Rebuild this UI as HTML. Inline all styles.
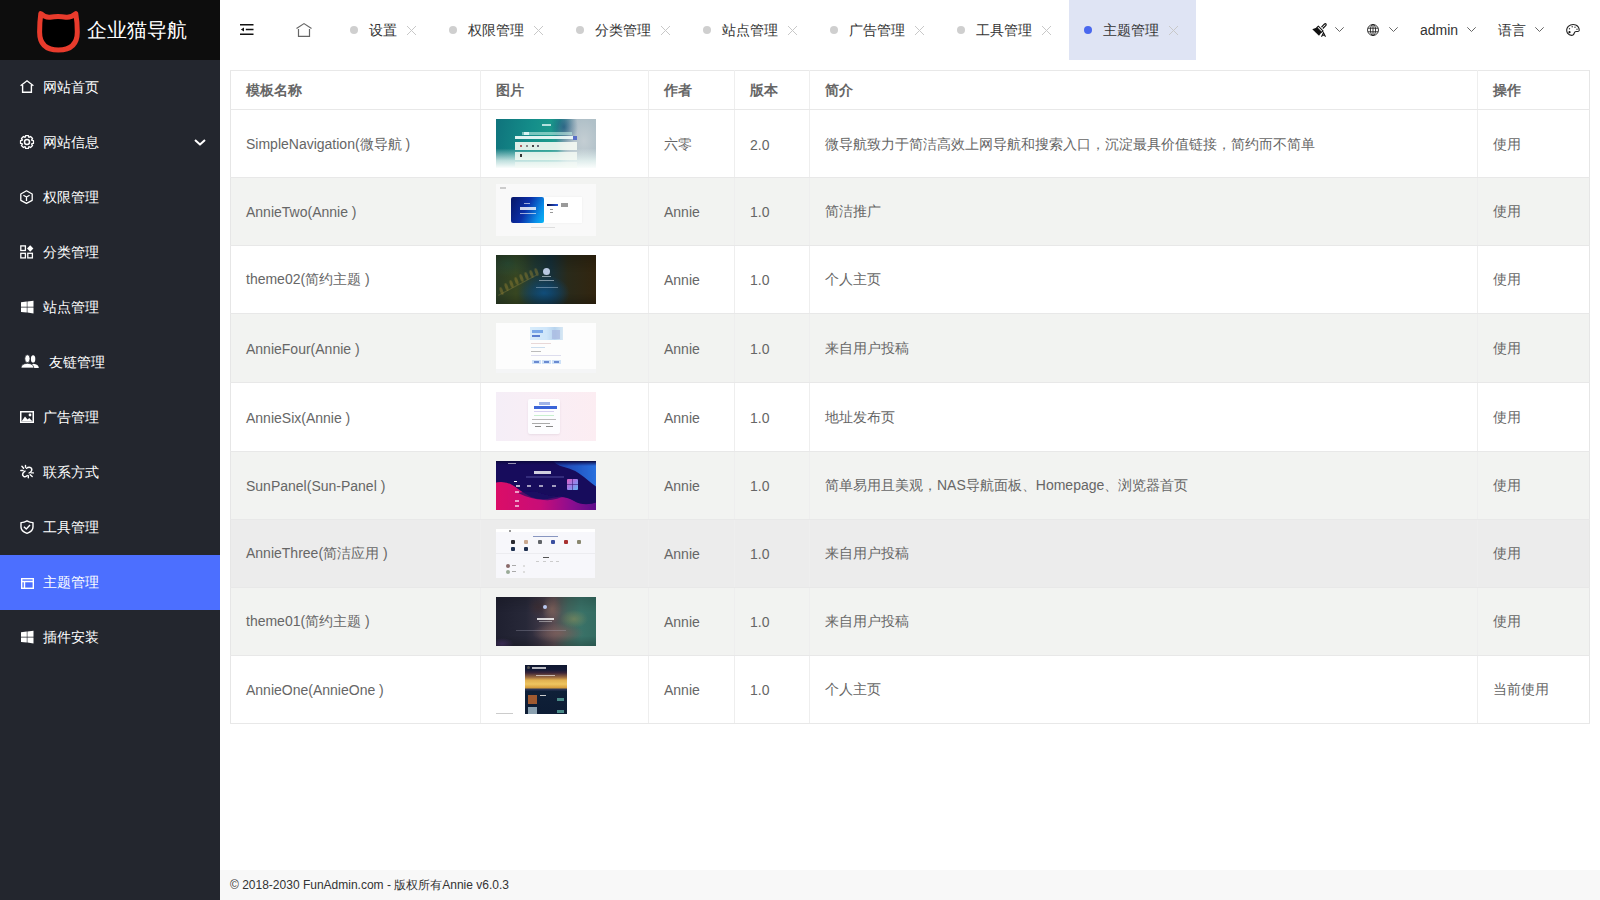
<!DOCTYPE html>
<html><head><meta charset="utf-8">
<style>
*{box-sizing:border-box;margin:0;padding:0}
html,body{width:1600px;height:900px;overflow:hidden;background:#fff;font-family:"Liberation Sans",sans-serif;}
svg{position:absolute;display:block;overflow:visible}
.side{position:absolute;left:0;top:0;width:220px;height:900px;background:#23262e;}
.logo{position:absolute;left:0;top:0;width:220px;height:60px;background:#0d0d0d;}
.logo .t{position:absolute;left:87px;top:16px;font-size:20px;line-height:28px;color:#fff;white-space:nowrap;}
.mi{position:absolute;left:0;width:220px;height:55px;color:#fff;font-size:14px;line-height:55px;}
.mi .tx{position:absolute;left:43px;top:0;white-space:nowrap;}
.mi.on{background:#4c6fff;}
.hdr{position:absolute;left:220px;top:0;width:1380px;height:60px;background:#fff;}
.tab{position:absolute;top:0;height:60px;font-size:14px;color:#333;}
.tab .dot{position:absolute;left:15px;top:26px;width:8px;height:8px;border-radius:50%;background:#cfcfcf;}
.tab .tx{position:absolute;left:34px;top:0;line-height:60px;white-space:nowrap;}
.tab.on{background:#dfe4f4;}
.tab.on .dot{background:#4a68ee;}
.rt{position:absolute;top:0;height:60px;line-height:60px;font-size:14px;color:#333;white-space:nowrap;}
table{position:absolute;left:230px;top:70px;border-collapse:collapse;table-layout:fixed;width:1359px;font-size:14px;color:#666;}
td,th{border:1px solid #e8e8e8;border-left-color:#eeeeee;border-right-color:#eeeeee;padding:1px 15px 0;text-align:left;white-space:nowrap;overflow:hidden;}
th{height:39px;font-weight:bold;color:#666;}
tr.g td{background:#f2f3f1;}
td:first-child,th:first-child{border-left-color:#e6e6e6;}
td:last-child,th:last-child{border-right-color:#e6e6e6;}
tr.r1 td{padding-top:3px;}
tr.h td{background:#ececec;}
.im{position:absolute;overflow:hidden;}
.im .im{filter:blur(.35px);}
.foot{position:absolute;left:220px;top:870px;width:1380px;height:30px;background:#f8f8f8;font-size:12px;line-height:30px;color:#333;padding-left:10px;}
</style></head><body>
<div class="side">
  <div class="logo">
    <svg style="left:0;top:0" width="100" height="60" viewBox="0 0 100 60"><path d="M40.8,13.6 Q45,17.8 50,17.3 Q58,15.8 66,17.3 Q71,17.8 75.8,13.6 Q77.3,22 77.3,32 Q77.3,50 58.4,50 Q39.6,50 39.6,32 Q39.6,22 40.8,13.6 Z" fill="#000" stroke="#e83b2c" stroke-width="5" stroke-linejoin="round"/></svg>
    <div class="t">企业猫导航</div>
  </div>
  <div class="mi" style="top:60px"><span class="tx">网站首页</span></div>
  <div class="mi" style="top:115px"><span class="tx">网站信息</span></div>
  <div class="mi" style="top:170px"><span class="tx">权限管理</span></div>
  <div class="mi" style="top:225px"><span class="tx">分类管理</span></div>
  <div class="mi" style="top:280px"><span class="tx">站点管理</span></div>
  <div class="mi" style="top:335px"><span class="tx" style="left:49px">友链管理</span></div>
  <div class="mi" style="top:390px"><span class="tx">广告管理</span></div>
  <div class="mi" style="top:445px"><span class="tx">联系方式</span></div>
  <div class="mi" style="top:500px"><span class="tx">工具管理</span></div>
  <div class="mi on" style="top:555px"><span class="tx">主题管理</span></div>
  <div class="mi" style="top:610px"><span class="tx">插件安装</span></div>
  <!-- icons -->
  <svg style="left:20px;top:80px" width="14" height="13" viewBox="0 0 14 13" fill="none" stroke="#fff" stroke-width="1.4"><path d="M0.6,5.8 L7,0.8 L13.4,5.8"/><path d="M2.6,5 V12.3 H11.4 V5"/></svg>
  <svg style="left:20px;top:135px" width="14" height="14" viewBox="0 0 14 14" fill="none" stroke="#fff" stroke-width="1.3" stroke-linejoin="round"><path d="M11.53,5.14 L13.44,5.56 L13.44,8.44 L11.53,8.86 L11.52,8.89 L12.57,10.54 L10.54,12.57 L8.89,11.52 L8.86,11.53 L8.44,13.44 L5.56,13.44 L5.14,11.53 L5.11,11.52 L3.46,12.57 L1.43,10.54 L2.48,8.89 L2.47,8.86 L0.56,8.44 L0.56,5.56 L2.47,5.14 L2.48,5.11 L1.43,3.46 L3.46,1.43 L5.11,2.48 L5.14,2.47 L5.56,0.56 L8.44,0.56 L8.86,2.47 L8.89,2.48 L10.54,1.43 L12.57,3.46 L11.52,5.11 Z"/><circle cx="7" cy="7" r="2.5" stroke-width="1.5"/></svg>
  <svg style="left:20px;top:190px" width="13" height="14" viewBox="0 0 13 14" fill="none" stroke="#fff" stroke-width="1.3" stroke-linejoin="round"><path d="M6.5,0.8 L12.2,4 V10.3 L6.5,13.3 L0.8,10.3 V4 Z"/><path d="M3.4,5.2 L6.5,7 L9.6,5.2 M6.5,7 V11"/></svg>
  <svg style="left:20px;top:245px" width="14" height="14" viewBox="0 0 14 14"><g fill="none" stroke="#fff" stroke-width="1.3"><rect x="0.8" y="0.9" width="4.6" height="4.6"/><rect x="0.8" y="8.3" width="4.6" height="4.6"/><rect x="7.8" y="8.3" width="4.6" height="4.6"/></g><path d="M10.2,0.3 L13.4,3.5 L10.2,6.7 L7,3.5 Z" fill="#fff"/></svg>
  <svg style="left:21px;top:301px" width="13" height="13" viewBox="0 0 13 13" fill="#fff"><path d="M0,1.3 L5.8,0.6 V5.8 H0 Z M6.4,0.5 L12.5,-0.2 V5.8 H6.4 Z M0,6.4 H5.8 V11.5 L0,10.9 Z M6.4,6.4 H12.5 V12.4 L6.4,11.6 Z"/></svg>
  <svg style="left:21px;top:355px" width="18" height="13" viewBox="0 0 18 13" fill="#fff"><ellipse cx="12.1" cy="3.9" rx="2.2" ry="3.7"/><path d="M10.5,13 Q10.5,9 12.3,8.7 Q17.6,9 17.8,13 Z"/><ellipse cx="6.4" cy="3.7" rx="2.6" ry="3.9" stroke="#23262e" stroke-width="0.7"/><path d="M0,13 Q0.3,8.6 6.4,8.3 Q12.6,8.6 12.8,13 Z" stroke="#23262e" stroke-width="0.7"/></svg>
  <svg style="left:20px;top:411px" width="14" height="12" viewBox="0 0 14 12"><rect x="0.75" y="0.75" width="12.5" height="10.5" fill="none" stroke="#fff" stroke-width="1.5"/><path d="M1.5,10.5 L5,5.5 L7.5,8.6 L9.3,7 L12.5,10.5 Z" fill="#fff"/><circle cx="10" cy="4" r="1.4" fill="#fff"/></svg>
  <svg style="left:21px;top:465px" width="13" height="13" viewBox="0 0 13 13" fill="none" stroke="#fff" stroke-width="1.4" stroke-linecap="round"><path d="M5.5,3.3 Q8,1.2 10.2,3 Q11.8,5 9.5,7.2 L8,8"/><path d="M4.1,6.1 L2.2,7.8 Q0.8,10 2.6,11.3 Q4.5,12.4 6.3,10.6"/><path d="M0.9,1.2 L2.6,3.2 M4.5,0.4 V2.2 M-0.2,5.5 H2.1 M10.3,7.9 H12.4 M9.2,9.8 L11.2,11.6 M7.3,10.7 V12.7"/></svg>
  <svg style="left:20px;top:520px" width="14" height="14" viewBox="0 0 14 14" fill="none" stroke="#fff" stroke-width="1.4" stroke-linejoin="round"><path d="M7,0.9 Q10,2.7 13,2.6 V7 Q13,11.4 7,13.3 Q1,11.4 1,7 V2.6 Q4,2.7 7,0.9 Z"/><path d="M3.9,6.7 L6.3,8.9 L10,5"/></svg>
  <svg style="left:21px;top:578px" width="13" height="11" viewBox="0 0 13 11" fill="none" stroke="#fff" stroke-width="1.4"><rect x="0.7" y="0.7" width="11.6" height="9.6"/><path d="M1,3.5 H12 M3.5,3.5 V10"/></svg>
  <svg style="left:21px;top:631px" width="13" height="13" viewBox="0 0 13 13" fill="#fff"><path d="M0,1.3 L5.8,0.6 V5.8 H0 Z M6.4,0.5 L12.5,-0.2 V5.8 H6.4 Z M0,6.4 H5.8 V11.5 L0,10.9 Z M6.4,6.4 H12.5 V12.4 L6.4,11.6 Z"/></svg>
  <svg style="left:194px;top:139px" width="12" height="7" viewBox="0 0 12 7" fill="none" stroke="#fff" stroke-width="2" stroke-linejoin="round"><path d="M1,1 L6,5.6 L11,1"/></svg>
</div>
<div class="hdr">
  <svg style="left:20px;top:24px" width="14" height="11" viewBox="0 0 14 11"><g stroke="#111" stroke-width="1.4"><path d="M0,0.7 H13.5 M0,10.3 H13.5 M5.8,5.5 H13.5"/></g><path d="M0.8,5.5 L4,3.4 V7.6 Z" fill="#111"/></svg>
  <svg style="left:76px;top:23px" width="16" height="14" viewBox="0 0 16 14" fill="none" stroke="#666" stroke-width="1.2"><path d="M0.5,5.6 L8,0.6 L15.5,5.6"/><path d="M2.5,6 V13.3 H13.5 V6"/></svg>
  <div class="tab" style="left:115px;width:99px"><span class="dot"></span><span class="tx">设置</span></div>
  <div class="tab" style="left:214px;width:127px"><span class="dot"></span><span class="tx">权限管理</span></div>
  <div class="tab" style="left:341px;width:127px"><span class="dot"></span><span class="tx">分类管理</span></div>
  <div class="tab" style="left:468px;width:127px"><span class="dot"></span><span class="tx">站点管理</span></div>
  <div class="tab" style="left:595px;width:127px"><span class="dot"></span><span class="tx">广告管理</span></div>
  <div class="tab" style="left:722px;width:127px"><span class="dot"></span><span class="tx">工具管理</span></div>
  <div class="tab on" style="left:849px;width:127px"><span class="dot"></span><span class="tx">主题管理</span></div>
  <svg style="left:187px;top:25.5px" width="9" height="9" viewBox="0 0 9 9" stroke="#c8c8c8" stroke-width="1"><path d="M0,0 L9,9 M9,0 L0,9"/></svg>
  <svg style="left:314px;top:25.5px" width="9" height="9" viewBox="0 0 9 9" stroke="#c8c8c8" stroke-width="1"><path d="M0,0 L9,9 M9,0 L0,9"/></svg>
  <svg style="left:441px;top:25.5px" width="9" height="9" viewBox="0 0 9 9" stroke="#c8c8c8" stroke-width="1"><path d="M0,0 L9,9 M9,0 L0,9"/></svg>
  <svg style="left:568px;top:25.5px" width="9" height="9" viewBox="0 0 9 9" stroke="#c8c8c8" stroke-width="1"><path d="M0,0 L9,9 M9,0 L0,9"/></svg>
  <svg style="left:695px;top:25.5px" width="9" height="9" viewBox="0 0 9 9" stroke="#c8c8c8" stroke-width="1"><path d="M0,0 L9,9 M9,0 L0,9"/></svg>
  <svg style="left:822px;top:25.5px" width="9" height="9" viewBox="0 0 9 9" stroke="#c8c8c8" stroke-width="1"><path d="M0,0 L9,9 M9,0 L0,9"/></svg>
  <svg style="left:949px;top:25.5px" width="9" height="9" viewBox="0 0 9 9" stroke="#c8c8c8" stroke-width="1"><path d="M0,0 L9,9 M9,0 L0,9"/></svg>
  <!-- right tools -->
  <svg style="left:1091px;top:23px" width="16" height="14" viewBox="0 0 16 14"><path d="M10.5,4.2 L13.3,1.2 Q14.3,0.3 15,1 Q15.6,1.8 14.7,2.7 L11.8,5.5" fill="none" stroke="#111" stroke-width="1.2"/><path d="M7.3,3.2 L12,7.9 L10.6,9.3 L5.9,4.6 Z" fill="none" stroke="#111" stroke-width="1.1"/><path d="M5.9,4.6 L10.6,9.3 L8,12.8 L1.3,6.2 Z" fill="#111"/><path d="M10.5,13.8 L12.5,9.8 L14.5,13.8 M11.3,12.3 H13.7" fill="none" stroke="#111" stroke-width="1.1"/></svg>
  <svg style="left:1115px;top:27px" width="9" height="5" viewBox="0 0 9 5" fill="none" stroke="#666" stroke-width="1"><path d="M0.3,0.3 L4.5,4.5 L8.7,0.3"/></svg>
  <svg style="left:1147px;top:24px" width="12" height="12" viewBox="0 0 12 12" fill="none" stroke="#222" stroke-width="0.9"><circle cx="6" cy="6" r="5.5"/><ellipse cx="6" cy="6" rx="2.6" ry="5.5"/><path d="M1,4.2 H11 M1,7.8 H11 M6,0.5 V11.5"/></svg>
  <svg style="left:1169px;top:27px" width="9" height="5" viewBox="0 0 9 5" fill="none" stroke="#666" stroke-width="1"><path d="M0.3,0.3 L4.5,4.5 L8.7,0.3"/></svg>
  <div class="rt" style="left:1200px">admin</div>
  <svg style="left:1247px;top:27px" width="9" height="5" viewBox="0 0 9 5" fill="none" stroke="#666" stroke-width="1"><path d="M0.3,0.3 L4.5,4.5 L8.7,0.3"/></svg>
  <div class="rt" style="left:1278px">语言</div>
  <svg style="left:1315px;top:27px" width="9" height="5" viewBox="0 0 9 5" fill="none" stroke="#666" stroke-width="1"><path d="M0.3,0.3 L4.5,4.5 L8.7,0.3"/></svg>
  <svg style="left:1346px;top:24px" width="14" height="12" viewBox="0 0 14 12"><path d="M6.5,11.3 Q3.5,11.8 1.5,9.2 Q-0.5,5.5 2.3,2.4 Q5.5,-0.5 9.8,0.9 Q13.4,2.6 13.2,6.5 Q13,7.5 11.8,7.5 L10,7.5 Q8.8,7.7 8.3,9 Q7.8,11 6.5,11.3 Z" fill="none" stroke="#222" stroke-width="1.1"/><circle cx="3.5" cy="8.2" r="1.1" fill="#111"/><circle cx="3.5" cy="4.7" r="0.7" fill="#333"/><circle cx="6.2" cy="2.8" r="0.7" fill="#333"/><circle cx="9" cy="3.2" r="0.7" fill="#333"/><circle cx="11" cy="5.3" r="0.7" fill="#333"/></svg>
</div>
<table>
<colgroup><col style="width:250px"><col style="width:168px"><col style="width:86px"><col style="width:75px"><col style="width:668px"><col style="width:112px"></colgroup>
<tr><th>模板名称</th><th>图片</th><th>作者</th><th>版本</th><th>简介</th><th>操作</th></tr>
<tr class="r1" style="height:68px"><td>SimpleNavigation(微导航 )</td><td></td><td>六零</td><td>2.0</td><td>微导航致力于简洁高效上网导航和搜索入口，沉淀最具价值链接，简约而不简单</td><td>使用</td></tr>
<tr class="g" style="height:68px"><td>AnnieTwo(Annie )</td><td></td><td>Annie</td><td>1.0</td><td>简洁推广</td><td>使用</td></tr>
<tr style="height:68px"><td>theme02(简约主题 )</td><td></td><td>Annie</td><td>1.0</td><td>个人主页</td><td>使用</td></tr>
<tr class="g" style="height:69px"><td>AnnieFour(Annie )</td><td></td><td>Annie</td><td>1.0</td><td>来自用户投稿</td><td>使用</td></tr>
<tr style="height:69px"><td>AnnieSix(Annie )</td><td></td><td>Annie</td><td>1.0</td><td>地址发布页</td><td>使用</td></tr>
<tr class="g" style="height:68px"><td>SunPanel(Sun-Panel )</td><td></td><td>Annie</td><td>1.0</td><td>简单易用且美观，NAS导航面板、Homepage、浏览器首页</td><td>使用</td></tr>
<tr class="h" style="height:68px"><td>AnnieThree(简洁应用 )</td><td></td><td>Annie</td><td>1.0</td><td>来自用户投稿</td><td>使用</td></tr>
<tr class="g" style="height:68px"><td>theme01(简约主题 )</td><td></td><td>Annie</td><td>1.0</td><td>来自用户投稿</td><td>使用</td></tr>
<tr style="height:68px"><td>AnnieOne(AnnieOne )</td><td></td><td>Annie</td><td>1.0</td><td>个人主页</td><td>当前使用</td></tr>
</table>
<div class="im" style="left:496px;top:119px;width:100px;height:49px;background:
linear-gradient(180deg,rgba(255,255,255,0) 0,rgba(255,255,255,0) 60%,rgba(235,248,245,.8) 85%,#fafdfc 100%),
radial-gradient(ellipse 14px 20px at 68px 8px,rgba(20,80,120,.75) 0,rgba(20,80,120,0) 100%),
radial-gradient(ellipse 28px 40px at 88px 22px,#c4ced3 0,#b0c0c8 55%,rgba(150,178,188,0) 100%),
linear-gradient(100deg,#0f737c 0,#148e8a 35%,#1c9a8c 55%,#3c9a9a 63%,#95b0b8 74%,#bcc8cc 100%);">
 <div class="im" style="left:46px;top:5px;width:9px;height:2px;background:rgba(230,250,250,.75)"></div>
 <div class="im" style="left:26px;top:13px;width:50px;height:3px;background:rgba(190,235,225,.6)"></div>
 <div class="im" style="left:28px;top:13px;width:5px;height:3px;background:rgba(240,255,255,.8)"></div>
 <div class="im" style="left:19px;top:17px;width:58px;height:3px;background:rgba(240,252,250,.92)"></div>
 <div class="im" style="left:77px;top:17px;width:4px;height:4px;background:#5a70c8"></div>
 <div class="im" style="left:19px;top:23px;width:62px;height:8px;background:rgba(245,250,243,.9)"></div>
 <div class="im" style="left:19px;top:33px;width:62px;height:8px;background:rgba(245,250,243,.85)"></div>
 <div class="im" style="left:19px;top:43px;width:62px;height:6px;background:rgba(245,250,245,.6)"></div>
 <div class="im" style="left:24px;top:26px;width:2px;height:2px;background:#b06060"></div>
 <div class="im" style="left:30px;top:26px;width:2px;height:2px;background:#888"></div>
 <div class="im" style="left:36px;top:26px;width:2px;height:2px;background:#444"></div>
 <div class="im" style="left:41px;top:26px;width:2px;height:2px;background:#667"></div>
 <div class="im" style="left:24px;top:35px;width:2px;height:3px;background:#333"></div>
</div>
<div class="im" style="left:496px;top:184px;width:100px;height:52px;background:#f9f9f9;">
 <div class="im" style="left:4px;top:3px;width:6px;height:2px;background:#ccc"></div>
 <div class="im" style="left:48px;top:13px;width:38px;height:26px;background:#fff;box-shadow:0 0 2px rgba(0,0,0,.06)"></div>
 <div class="im" style="left:15px;top:13px;width:33px;height:26px;border-radius:2px;background:linear-gradient(115deg,#071666 0,#0b2fa8 45%,#0a8ee8 80%,#08b8f6 100%)"></div>
 <div class="im" style="left:28px;top:19px;width:6px;height:1px;background:rgba(255,255,255,.6)"></div>
 <div class="im" style="left:24px;top:23px;width:16px;height:3px;background:rgba(255,255,255,.8)"></div>
 <div class="im" style="left:24px;top:29px;width:16px;height:1px;background:rgba(255,255,255,.6)"></div>
 <div class="im" style="left:51px;top:20px;width:11px;height:2px;background:linear-gradient(90deg,#050a40,#2a5ae0)"></div>
 <div class="im" style="left:65px;top:19px;width:7px;height:4px;background:#9a9a9a"></div>
 <div class="im" style="left:54px;top:25px;width:3px;height:1px;background:#999"></div>
 <div class="im" style="left:54px;top:28px;width:3px;height:1px;background:#999"></div>
 <div class="im" style="left:35px;top:43px;width:24px;height:1px;background:#ddd"></div>
</div>
<div class="im" style="left:496px;top:255px;width:100px;height:49px;background:
radial-gradient(ellipse 26px 18px at 48px 38px,rgba(16,78,125,.95) 0,rgba(16,70,110,.55) 55%,rgba(16,60,100,0) 100%),
radial-gradient(ellipse 20px 14px at 12px 8px,rgba(40,80,60,.7) 0,rgba(40,80,60,0) 100%),
linear-gradient(90deg,#2a3b24 0,#374621 20%,#1f3834 40%,#173039 55%,#2a2a1a 72%,#32250f 100%);">
 <div class="im" style="left:0;top:0;width:100px;height:49px;background:linear-gradient(180deg,rgba(0,0,0,.2),rgba(0,0,0,0) 35%,rgba(0,0,0,0) 80%,rgba(0,0,0,.2))"></div>
 <div class="im" style="left:2px;top:40px;width:44px;height:1px;background:rgba(170,150,70,.3);transform:rotate(-28deg);transform-origin:0 0"></div>
 <div class="im" style="left:4px;top:32px;width:3px;height:8px;border-radius:50%;background:rgba(150,130,50,.45);transform:rotate(-20deg);filter:blur(.7px)"></div>
 <div class="im" style="left:9px;top:28px;width:3px;height:8px;border-radius:50%;background:rgba(150,130,50,.45);transform:rotate(-20deg);filter:blur(.7px)"></div>
 <div class="im" style="left:14px;top:25px;width:3px;height:8px;border-radius:50%;background:rgba(150,130,50,.45);transform:rotate(-20deg);filter:blur(.7px)"></div>
 <div class="im" style="left:19px;top:22px;width:3px;height:8px;border-radius:50%;background:rgba(150,130,50,.45);transform:rotate(-20deg);filter:blur(.7px)"></div>
 <div class="im" style="left:24px;top:19px;width:3px;height:8px;border-radius:50%;background:rgba(150,130,50,.45);transform:rotate(-20deg);filter:blur(.7px)"></div>
 <div class="im" style="left:29px;top:17px;width:3px;height:8px;border-radius:50%;background:rgba(150,130,50,.45);transform:rotate(-20deg);filter:blur(.7px)"></div>
 <div class="im" style="left:34px;top:15px;width:3px;height:8px;border-radius:50%;background:rgba(150,130,50,.45);transform:rotate(-20deg);filter:blur(.7px)"></div>
 <div class="im" style="left:39px;top:13px;width:3px;height:8px;border-radius:50%;background:rgba(150,130,50,.45);transform:rotate(-20deg);filter:blur(.7px)"></div>
 <div class="im" style="left:47px;top:13px;width:7px;height:7px;border-radius:50%;background:#b8c8e0"></div>
 <div class="im" style="left:46px;top:21px;width:9px;height:1px;background:rgba(230,240,250,.55)"></div>
 <div class="im" style="left:43px;top:25px;width:15px;height:1px;background:rgba(230,240,250,.5)"></div>
 <div class="im" style="left:40px;top:32px;width:22px;height:1px;background:rgba(200,220,240,.4)"></div>
</div>
<div class="im" style="left:496px;top:323px;width:100px;height:50px;background:#fdfdfd;">
 <div class="im" style="left:34px;top:4px;width:33px;height:13px;background:linear-gradient(90deg,#d8ecfb 0,#cfe6fa 50%,#b8d4ee 75%,#d8e8f4 100%)"></div>
 <div class="im" style="left:36px;top:7px;width:11px;height:3px;background:#7aa8e8"></div>
 <div class="im" style="left:36px;top:12px;width:8px;height:2px;background:#5a7fd0"></div>
 <div class="im" style="left:56px;top:7px;width:8px;height:9px;background:#a8b8e0;opacity:.7"></div>
 <div class="im" style="left:35px;top:20px;width:20px;height:1px;background:#e8d8d8"></div>
 <div class="im" style="left:35px;top:24px;width:14px;height:1px;background:#cde"></div>
 <div class="im" style="left:35px;top:28px;width:10px;height:1px;background:#bbb"></div>
 <div class="im" style="left:35px;top:32px;width:30px;height:1px;background:#dde"></div>
 <div class="im" style="left:36px;top:37px;width:9px;height:4px;background:#cfe2f8"></div>
 <div class="im" style="left:46px;top:37px;width:9px;height:4px;background:#cfe2f8"></div>
 <div class="im" style="left:56px;top:37px;width:9px;height:4px;background:#cfe2f8"></div>
 <div class="im" style="left:38px;top:38px;width:5px;height:2px;background:#6a8ad0"></div>
 <div class="im" style="left:48px;top:38px;width:5px;height:2px;background:#6a8ad0"></div>
 <div class="im" style="left:58px;top:38px;width:5px;height:2px;background:#6a8ad0"></div>
 <div class="im" style="left:0;top:46px;width:100px;height:4px;background:#f4f5f6"></div>
</div>
<div class="im" style="left:496px;top:392px;width:100px;height:49px;background:linear-gradient(90deg,#f5eef7 0,#f9eef5 50%,#fcedf2 100%);">
 <div class="im" style="left:32px;top:7px;width:32px;height:35px;border-radius:2px;background:#fdfdff;box-shadow:0 1px 2px rgba(150,120,140,.15)"></div>
 <div class="im" style="left:43px;top:10px;width:11px;height:3px;background:#a0b4e8"></div>
 <div class="im" style="left:38px;top:14px;width:23px;height:3px;background:#3a64d8"></div>
 <div class="im" style="left:38px;top:19px;width:20px;height:1px;background:#d8d0f0"></div>
 <div class="im" style="left:38px;top:23px;width:20px;height:1px;background:#c8f0d0"></div>
 <div class="im" style="left:36px;top:27px;width:24px;height:1px;background:#bbb"></div>
 <div class="im" style="left:36px;top:31px;width:18px;height:1px;background:#aaa"></div>
 <div class="im" style="left:39px;top:34px;width:6px;height:1px;background:#888"></div>
 <div class="im" style="left:50px;top:34px;width:7px;height:1px;background:#888"></div>
</div>
<div class="im" style="left:496px;top:461px;width:100px;height:49px;background:#170c5c;">
 <svg style="left:0;top:0" width="100" height="49" viewBox="0 0 100 49"><defs><linearGradient id="sp1" x1="0" y1="0" x2="1" y2="0"><stop offset="0" stop-color="#1a3aa8"/><stop offset="1" stop-color="#2a72e0"/></linearGradient><linearGradient id="sp2" x1="0" y1="0" x2="1" y2="0"><stop offset="0" stop-color="#dc0c66"/><stop offset=".45" stop-color="#c80c78"/><stop offset=".75" stop-color="#8a1090"/><stop offset="1" stop-color="#5a0c8a"/></linearGradient><linearGradient id="sp3" x1="0" y1="0" x2="0" y2="1"><stop offset="0" stop-color="#0a0838"/><stop offset="1" stop-color="#170c5c" stop-opacity="0"/></linearGradient><filter id="spb"><feGaussianBlur stdDeviation=".6"/></filter></defs>
 <g filter="url(#spb)"><path d="M56,-2 H102 V27 Q95,22 88,16 Q78,8 68,6 Q59,4 56,-2 Z" fill="url(#sp1)"/><path d="M-2,22 Q9,19 18,25 Q27,32 35,36 Q45,40 56,37 Q68,34 78,40 Q88,46 102,41 V51 H-2 Z" fill="url(#sp2)"/><path d="M22,32 Q36,28 48,33 Q58,37 70,34 Q60,40 48,39 Q34,38 22,32 Z" fill="#1c0c64" opacity=".7"/></g>
 <rect x="0" y="0" width="100" height="5" fill="url(#sp3)"/></svg>
 <div class="im" style="left:12px;top:2px;width:8px;height:1px;background:rgba(255,255,255,.55)"></div>
 <div class="im" style="left:38px;top:10px;width:17px;height:3px;background:rgba(255,255,255,.8)"></div>
 <div class="im" style="left:30px;top:15px;width:38px;height:2px;background:rgba(120,120,200,.3)"></div>
 <div class="im" style="left:71px;top:18px;width:11px;height:11px;border-radius:1px;background:linear-gradient(135deg,#e060c0,#9a80e8 50%,#60b8f0)"></div>
 <div class="im" style="left:76px;top:18px;width:1px;height:11px;background:rgba(60,30,120,.6)"></div>
 <div class="im" style="left:71px;top:23px;width:11px;height:1px;background:rgba(60,30,120,.6)"></div>
<div class="im" style="left:18px;top:20px;width:3px;height:1px;background:#fff"></div>
 <div class="im" style="left:20px;top:24px;width:4px;height:2px;background:rgba(255,255,255,.7)"></div>
 <div class="im" style="left:31px;top:24px;width:4px;height:2px;background:rgba(255,255,255,.6)"></div>
 <div class="im" style="left:43px;top:24px;width:4px;height:2px;background:rgba(255,255,255,.6)"></div>
 <div class="im" style="left:56px;top:24px;width:4px;height:2px;background:rgba(255,255,255,.6)"></div>
 <div class="im" style="left:19px;top:30px;width:4px;height:2px;background:rgba(255,255,255,.6)"></div>
 <div class="im" style="left:19px;top:39px;width:4px;height:2px;background:rgba(255,255,255,.6)"></div>
 <div class="im" style="left:19px;top:44px;width:4px;height:2px;background:rgba(255,255,255,.6)"></div>
</div>
<div class="im" style="left:496px;top:529px;width:99px;height:49px;background:#f7f7fb;">
 <div class="im" style="left:0;top:0;width:99px;height:3px;background:#fff"></div>
 <div class="im" style="left:13px;top:1px;width:2px;height:2px;background:#999"></div>
 <div class="im" style="left:37px;top:7px;width:25px;height:1px;background:#8896c0"></div>
 <div class="im" style="left:15px;top:11px;width:4px;height:4px;border-radius:1px;background:#2a2a30"></div>
 <div class="im" style="left:28px;top:11px;width:4px;height:4px;border-radius:1px;background:#c8a890"></div>
 <div class="im" style="left:42px;top:11px;width:4px;height:4px;border-radius:1px;background:#606468"></div>
 <div class="im" style="left:55px;top:11px;width:4px;height:4px;border-radius:1px;background:#3a4ea0"></div>
 <div class="im" style="left:68px;top:11px;width:4px;height:4px;border-radius:1px;background:#a83030"></div>
 <div class="im" style="left:81px;top:11px;width:4px;height:4px;border-radius:1px;background:#8a8870"></div>
 <div class="im" style="left:15px;top:18px;width:4px;height:4px;border-radius:1px;background:#1e3050"></div>
 <div class="im" style="left:28px;top:18px;width:4px;height:4px;border-radius:1px;background:#1e3050"></div>
 <div class="im" style="left:0;top:24px;width:99px;height:1px;background:#ececf0"></div>
 <div class="im" style="left:47px;top:28px;width:6px;height:1px;background:#555"></div>
 <div class="im" style="left:40px;top:32px;width:3px;height:1px;background:#ccc"></div>
 <div class="im" style="left:47px;top:32px;width:3px;height:1px;background:#ccc"></div>
 <div class="im" style="left:54px;top:32px;width:3px;height:1px;background:#ccc"></div>
 <div class="im" style="left:60px;top:32px;width:3px;height:1px;background:#ccc"></div>
 <div class="im" style="left:10px;top:35px;width:4px;height:4px;border-radius:50%;background:#8a6a6a"></div>
 <div class="im" style="left:16px;top:36px;width:4px;height:1px;background:#aaa"></div>
 <div class="im" style="left:27px;top:36px;width:2px;height:2px;background:#ddd"></div>
 <div class="im" style="left:10px;top:41px;width:4px;height:4px;border-radius:50%;background:#9aaa98"></div>
 <div class="im" style="left:16px;top:42px;width:4px;height:1px;background:#aaa"></div>
 <div class="im" style="left:27px;top:42px;width:2px;height:2px;background:#ddd"></div>
</div>
<div class="im" style="left:496px;top:597px;width:100px;height:49px;background:
radial-gradient(ellipse 26px 10px at 62px 36px,rgba(125,95,92,.85) 0,rgba(110,85,85,0) 100%),
radial-gradient(ellipse 10px 14px at 56px 12px,rgba(125,98,90,.85) 0,rgba(100,80,80,0) 100%),
radial-gradient(ellipse 10px 10px at 42px 10px,rgba(60,45,50,.8) 0,rgba(60,45,50,0) 100%),
radial-gradient(ellipse 14px 9px at 78px 22px,rgba(150,150,90,.5) 0,rgba(150,150,90,0) 100%),
radial-gradient(ellipse 12px 6px at 6px 47px,rgba(90,60,130,.6) 0,rgba(90,60,130,0) 100%),
linear-gradient(90deg,#1f2030 0,#272838 30%,#383342 42%,#5a4c52 58%,#42665e 72%,#3a7268 85%,#356c62 100%);">
 <div class="im" style="left:0;top:0;width:100px;height:49px;background:linear-gradient(180deg,rgba(0,0,0,.15),rgba(0,0,0,0) 30%,rgba(0,0,0,0) 80%,rgba(0,0,0,.2))"></div>
 <div class="im" style="left:47px;top:8px;width:4px;height:4px;border-radius:50%;background:#b8c8f0"></div>
 <div class="im" style="left:41px;top:21px;width:17px;height:2px;background:rgba(255,255,255,.8)"></div>
 <div class="im" style="left:43px;top:24px;width:13px;height:1px;background:rgba(255,255,255,.4)"></div>
 <div class="im" style="left:20px;top:33px;width:50px;height:1px;background:rgba(200,200,220,.25)"></div>
</div>
<div class="im" style="left:525px;top:665px;width:42px;height:49px;background:linear-gradient(180deg,#0f1830 0,#141a36 10%,#3a2438 16%,#9a6a40 25%,#e0b050 31%,#eec560 39%,#d8a040 46%,#2a3454 50%,#0f2038 54%,#0d1c34 100%);">
 <div class="im" style="left:2px;top:1px;width:3px;height:3px;border-radius:50%;background:#555"></div>
 <div class="im" style="left:7px;top:2px;width:14px;height:2px;background:rgba(255,255,255,.7)"></div>
 <div class="im" style="left:11px;top:10px;width:19px;height:1px;background:rgba(255,255,255,.6)"></div>
 <div class="im" style="left:3px;top:30px;width:9px;height:9px;background:#a05a30"></div>
 <div class="im" style="left:15px;top:30px;width:6px;height:1px;background:#ccc"></div>
 <div class="im" style="left:32px;top:33px;width:7px;height:3px;background:#4a8a88"></div>
 <div class="im" style="left:3px;top:42px;width:9px;height:7px;background:#8aa0b0"></div>
 <div class="im" style="left:32px;top:45px;width:7px;height:3px;background:#4a8a88"></div>
</div>
<div class="im" style="left:496px;top:713px;width:17px;height:1px;background:#ccc"></div>

<div class="foot">© 2018-2030 FunAdmin.com - 版权所有Annie v6.0.3</div>
</body></html>
